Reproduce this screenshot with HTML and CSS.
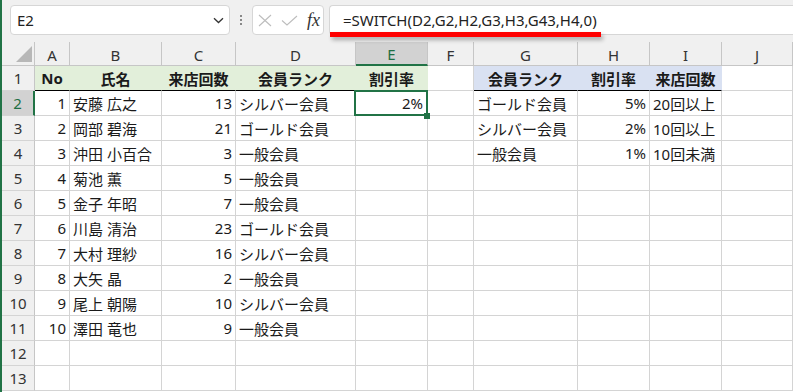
FILE: index.html
```html
<!DOCTYPE html>
<html lang="ja">
<head>
    <meta charset="UTF-8">
    <title>SWITCH関数 - Excel</title>
    <link rel="stylesheet" href="styles.css">
</head>
<body>
<div class="app">
    <!-- 数式バー -->
    <div class="toolbar">
        <div class="name-box">
            <span class="name">E2</span>
            <svg class="chev" width="11" height="7" viewBox="0 0 11 7"><path d="M1 1.2l4.5 4.3 4.5-4.3" fill="none" stroke="#333" stroke-width="1.3"/></svg>
        </div>
        <div class="grip"><i></i><i></i><i></i></div>
        <div class="fx-box">
            <svg width="14" height="13" viewBox="0 0 14 13"><path d="M1 1l12 11M13 1L1 12" stroke="#bdbdbd" stroke-width="1.1"/></svg>
            <svg class="check" width="17" height="11" viewBox="0 0 17 11"><path d="M1 5.5l5 4.5 10-9" fill="none" stroke="#bdbdbd" stroke-width="1.1"/></svg>
            <span class="fx">fx</span>
        </div>
        <div class="formula-box">
            <span class="formula">=SWITCH(D2,G2,H2,G3,H3,G43,H4,0)</span>
            <span class="mark"></span>
        </div>
    </div>

    <!-- シート -->
    <div class="sheet">
        <div class="corner"><span class="tri"></span></div>
        <div class="ch">A</div><div class="ch">B</div><div class="ch">C</div><div class="ch">D</div><div class="ch sel-col">E</div><div class="ch">F</div><div class="ch">G</div><div class="ch">H</div><div class="ch">I</div><div class="ch">J</div>

        <div class="rh">1</div>
        <div class="c hg">No</div><div class="c hg">氏名</div><div class="c hg">来店回数</div><div class="c hg">会員ランク</div><div class="c hg">割引率</div>
        <div class="c"></div>
        <div class="c hb">会員ランク</div><div class="c hb">割引率</div><div class="c hb">来店回数</div>
        <div class="c"></div>

        <div class="rh sel-row">2</div>
        <div class="c num">1</div><div class="c">安藤 広之</div><div class="c num">13</div><div class="c">シルバー会員</div><div class="c num active">2%</div><div class="c"></div><div class="c">ゴールド会員</div><div class="c num">5%</div><div class="c">20回以上</div><div class="c"></div>

        <div class="rh">3</div>
        <div class="c num">2</div><div class="c">岡部 碧海</div><div class="c num">21</div><div class="c">ゴールド会員</div><div class="c"></div><div class="c"></div><div class="c">シルバー会員</div><div class="c num">2%</div><div class="c">10回以上</div><div class="c"></div>

        <div class="rh">4</div>
        <div class="c num">3</div><div class="c">沖田 小百合</div><div class="c num">3</div><div class="c">一般会員</div><div class="c"></div><div class="c"></div><div class="c">一般会員</div><div class="c num">1%</div><div class="c">10回未満</div><div class="c"></div>

        <div class="rh">5</div>
        <div class="c num">4</div><div class="c">菊池 薫</div><div class="c num">5</div><div class="c">一般会員</div><div class="c"></div><div class="c"></div><div class="c"></div><div class="c"></div><div class="c"></div><div class="c"></div>

        <div class="rh">6</div>
        <div class="c num">5</div><div class="c">金子 年昭</div><div class="c num">7</div><div class="c">一般会員</div><div class="c"></div><div class="c"></div><div class="c"></div><div class="c"></div><div class="c"></div><div class="c"></div>

        <div class="rh">7</div>
        <div class="c num">6</div><div class="c">川島 清治</div><div class="c num">23</div><div class="c">ゴールド会員</div><div class="c"></div><div class="c"></div><div class="c"></div><div class="c"></div><div class="c"></div><div class="c"></div>

        <div class="rh">8</div>
        <div class="c num">7</div><div class="c">大村 理紗</div><div class="c num">16</div><div class="c">シルバー会員</div><div class="c"></div><div class="c"></div><div class="c"></div><div class="c"></div><div class="c"></div><div class="c"></div>

        <div class="rh">9</div>
        <div class="c num">8</div><div class="c">大矢 晶</div><div class="c num">2</div><div class="c">一般会員</div><div class="c"></div><div class="c"></div><div class="c"></div><div class="c"></div><div class="c"></div><div class="c"></div>

        <div class="rh">10</div>
        <div class="c num">9</div><div class="c">尾上 朝陽</div><div class="c num">10</div><div class="c">シルバー会員</div><div class="c"></div><div class="c"></div><div class="c"></div><div class="c"></div><div class="c"></div><div class="c"></div>

        <div class="rh">11</div>
        <div class="c num">10</div><div class="c">澤田 竜也</div><div class="c num">9</div><div class="c">一般会員</div><div class="c"></div><div class="c"></div><div class="c"></div><div class="c"></div><div class="c"></div><div class="c"></div>

        <div class="rh">12</div>
        <div class="c"></div><div class="c"></div><div class="c"></div><div class="c"></div><div class="c"></div><div class="c"></div><div class="c"></div><div class="c"></div><div class="c"></div><div class="c"></div>

        <div class="rh">13</div>
        <div class="c"></div><div class="c"></div><div class="c"></div><div class="c"></div><div class="c"></div><div class="c"></div><div class="c"></div><div class="c"></div><div class="c"></div><div class="c"></div>
    </div>
</div>
</body>
</html>
```

FILE: styles.css
```css
* {
    margin: 0;
    padding: 0;
    box-sizing: border-box;
}
body {
    font-family: "Noto Sans", "Noto Sans CJK JP", sans-serif;
    background-color: #fff;
    color: #1a1a1a;
    overflow: hidden;
}
.app {
    width: 793px;
    height: 392px;
    border-left: 2px solid #217346;
    overflow: hidden;
}

/* 数式バー */
.toolbar {
    display: flex;
    height: 42px;
    padding: 5px 0 7px 8px;
    background-color: #f0f0f0;
}
.name-box {
    display: flex;
    align-items: center;
    justify-content: space-between;
    width: 220px;
    height: 30px;
    padding: 0 5px 0 6px;
    background-color: #fff;
    border: 1px solid #d6d6d6;
    border-radius: 4px;
}
.name {
    font-size: 15px;
    color: #222;
}
.grip {
    display: flex;
    flex-direction: column;
    align-items: center;
    justify-content: center;
    gap: 2px;
    width: 22px;
}
.grip i {
    width: 2px;
    height: 2px;
    background-color: #888;
}
.fx-box {
    display: flex;
    align-items: center;
    width: 72px;
    height: 30px;
    padding-left: 5px;
    background-color: #fff;
    border: 1px solid #d6d6d6;
    border-radius: 4px;
}
.check {
    margin-left: 9px;
}
.fx {
    margin-left: 9px;
    font-family: "Liberation Serif", serif;
    font-style: italic;
    font-size: 18px;
    color: #333;
}
.formula-box {
    position: relative;
    flex: 1;
    display: flex;
    align-items: center;
    height: 30px;
    margin-left: 5px;
    padding-left: 13px;
    background-color: #fff;
    border: 1px solid #d6d6d6;
    border-right: none;
    border-radius: 4px 0 0 4px;
}
.formula {
    font-size: 15px;
    color: #222;
}
.mark {
    position: absolute;
    left: 0;
    top: 26px;
    width: 271px;
    height: 5px;
    background-color: #f00;
    box-shadow: 2px 3px 4px rgba(0,0,0,0.3);
}

/* シート */
.sheet {
    display: grid;
    grid-template-columns: 33px 35px 92px 74px 120px 72px 46px 104px 72px 72px 1fr;
    grid-template-rows: 24px;
    grid-auto-rows: 25px;
    font-size: 15px;
}
.corner, .ch, .rh {
    display: flex;
    align-items: center;
    justify-content: center;
    background-color: #f0f0f0;
    color: #333;
}
.corner {
    position: relative;
    border-right: 1px solid #c6c6c6;
    border-bottom: 1px solid #c6c6c6;
}
.tri {
    position: absolute;
    right: 2px;
    bottom: 3px;
    width: 0;
    height: 0;
    border-left: 16px solid transparent;
    border-bottom: 16px solid #b7b7b7;
}
.ch {
    padding-top: 2px;
    border-right: 1px solid #c6c6c6;
    border-bottom: 1px solid #c6c6c6;
}
.rh {
    border-right: 1px solid #c6c6c6;
    border-bottom: 1px solid #d4d4d4;
}
.sel-col {
    background-color: #d2d2d2;
    border-bottom: 2px solid #217346;
    color: #1e6e42;
}
.sel-row {
    background-color: #d2d2d2;
    border-right: 2px solid #217346;
    color: #1e6e42;
}
.c {
    display: flex;
    align-items: center;
    padding: 0 3px;
    white-space: nowrap;
    border-right: 1px solid #d4d4d4;
    border-bottom: 1px solid #d4d4d4;
}
.num {
    justify-content: flex-end;
}
.hg, .hb {
    justify-content: center;
    font-weight: bold;
    border-bottom: 1px solid #000;
}
.hg {
    background-color: #e2efda;
    border-right-color: #e2efda;
}
.hb {
    background-color: #d9e1f2;
    border-right-color: #d9e1f2;
}
.active {
    position: relative;
    padding-right: 4px;
}
.active::after {
    content: "";
    position: absolute;
    left: -2px;
    top: -1px;
    right: -1px;
    bottom: -1px;
    border: 2px solid #217346;
}
.active::before {
    content: "";
    position: absolute;
    right: -3px;
    bottom: -4px;
    width: 6px;
    height: 6px;
    background-color: #217346;
    z-index: 1;
}
```
